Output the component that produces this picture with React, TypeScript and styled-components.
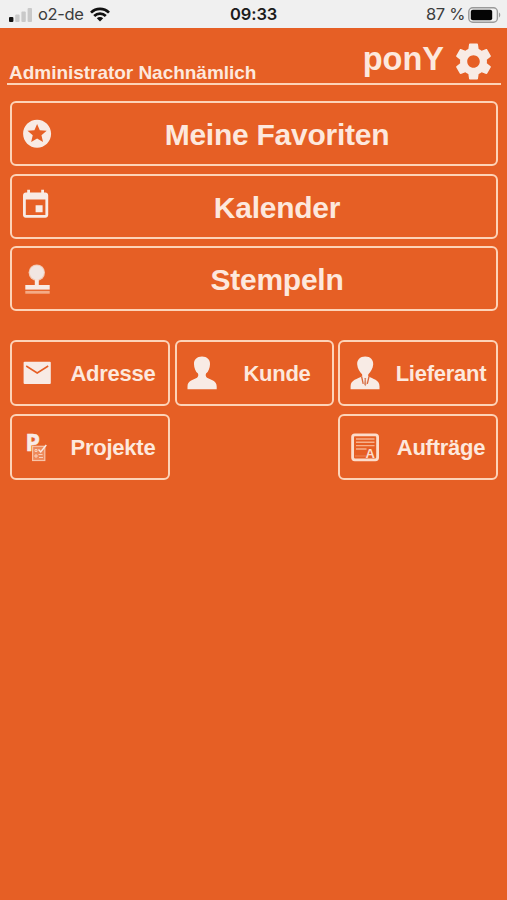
import React from 'react';
import styled, { createGlobalStyle } from 'styled-components';

const ORANGE = '#e65f25';
const LINE = '#fdd3b8';
const TEXT = '#fde8dd';
const ICON = '#f8ebe5';

const GlobalStyle = createGlobalStyle`
  body {
    margin: 0;
    background: ${ORANGE};
  }
`;

const Screen = styled.div`
  width: 507px;
  height: 900px;
  overflow: hidden;
  display: flex;
  flex-direction: column;
  background: ${ORANGE};
  color: ${TEXT};
  font-family: 'Liberation Sans', Arial, sans-serif;
  font-weight: 700;
`;

const StatusBar = styled.div`
  flex: none;
  box-sizing: border-box;
  height: 28px;
  padding: 1px 6px 0 9px;
  display: grid;
  grid-template-columns: 221px auto 1fr;
  align-items: center;
  background: #f0f0f0;
  color: #3c3c3c;
  font: 400 16.5px/27px Inter, sans-serif;
`;

const StatusGroup = styled.div<{ $end?: boolean }>`
  display: flex;
  align-items: center;
  justify-content: ${(p) => (p.$end ? 'flex-end' : 'flex-start')};
  gap: ${(p) => (p.$end ? 3 : 6)}px;
  white-space: nowrap;
  letter-spacing: -0.35px;
`;

const Clock = styled.span`
  font-weight: 600;
  font-size: 16.5px;
  letter-spacing: -0.1px;
  color: #1c1c1c;
`;

const Header = styled.header`
  flex: none;
  box-sizing: border-box;
  height: 57px;
  margin: 0 6px 0 7px;
  padding: 0 6px 0 2px;
  border-bottom: 2px solid ${LINE};
  display: flex;
  align-items: flex-end;
  justify-content: space-between;
`;

const UserName = styled.span`
  font-size: 19px;
  line-height: 20px;
  letter-spacing: -0.03px;
`;

const Brand = styled.div`
  display: flex;
  align-items: center;
  gap: 8px;
  height: 44px;
`;

const BrandName = styled.h1`
  margin: 0 0 5px;
  font-size: 32.5px;
  line-height: 36px;
`;

const Main = styled.main`
  display: flex;
  flex-direction: column;
  width: 488px;
  margin: 16px 0 0 10px;
`;

const WideList = styled.div`
  display: flex;
  flex-direction: column;
  gap: 7.7px;
  height: 239px;
`;

const TileGrid = styled.div`
  display: grid;
  grid-template-columns: 160px 159px 160px;
  justify-content: space-between;
  row-gap: 8px;
`;

const Tile = styled.button<{ $wide?: boolean; $column?: number }>`
  box-sizing: border-box;
  flex: none;
  height: ${(p) => (p.$wide ? 65 : 66)}px;
  padding: 0;
  display: flex;
  align-items: center;
  border: 2px solid ${LINE};
  border-radius: 6px;
  background: transparent;
  color: inherit;
  font: inherit;
  font-size: ${(p) => (p.$wide ? 30 : 22)}px;
  letter-spacing: -0.25px;
  grid-column: ${(p) => p.$column ?? 'auto'};
`;

const TileLabel = styled.span<{ $wide?: boolean }>`
  flex: 1;
  text-align: center;
  padding: ${(p) => (p.$wide ? 3 : 1)}px 0 0 2px;
`;

const IconCanvas = styled.svg`
  flex: none;
  width: 44px;
  height: 62px;
  fill: ${ICON};
`;

const Glyph = ({ children }: { children: React.ReactNode }) => (
  <IconCanvas viewBox="2 2 44 62" aria-hidden="true">
    {children}
  </IconCanvas>
);

const SignalIcon = () => (
  <svg width="23" height="14" viewBox="0 0 23 14">
    <rect x="0" y="9" width="4.4" height="5" rx="1" fill="#111" />
    <rect x="6.2" y="6.5" width="4.4" height="7.5" rx="1" fill="#c9c9c9" />
    <rect x="12.4" y="3.5" width="4.4" height="10.5" rx="1" fill="#c9c9c9" />
    <rect x="18.6" y="0" width="4.4" height="14" rx="1" fill="#c9c9c9" />
  </svg>
);

const WifiIcon = () => (
  <svg width="20" height="15" viewBox="0 0 20 15">
    <g fill="none" stroke="#111" strokeWidth="2.7">
      <path d="M1 5.6a12.7 12.7 0 0 1 18 0" />
      <path d="M4.2 9a8.2 8.2 0 0 1 11.6 0" />
    </g>
    <path d="M10 14.6 6.8 11.3a4.6 4.6 0 0 1 6.4 0z" fill="#111" />
  </svg>
);

const BatteryIcon = () => (
  <svg width="33" height="16" viewBox="0 0 33 16">
    <rect x="0.8" y="0.8" width="28.6" height="14.4" rx="4" fill="none" stroke="#9a9a9a" strokeWidth="1.4" />
    <rect x="2.8" y="2.8" width="21.4" height="10.4" rx="2" fill="#050505" />
    <path d="M31 5.6c1.7.7 1.7 4.1 0 4.8z" fill="#9a9a9a" />
  </svg>
);

const GearIcon = () => (
  <svg width="43" height="43" viewBox="0 0 24 24" fill={ICON}>
    <path d="M19.43 12.98c.04-.32.07-.64.07-.98s-.03-.66-.07-.98l2.11-1.65c.19-.15.24-.42.12-.64l-2-3.46c-.12-.22-.39-.3-.61-.22l-2.49 1c-.52-.4-1.08-.73-1.69-.98l-.38-2.65C14.46 2.18 14.25 2 14 2h-4c-.25 0-.46.18-.49.42l-.38 2.65c-.61.25-1.17.59-1.69.98l-2.49-1c-.23-.09-.49 0-.61.22l-2 3.46c-.13.22-.07.49.12.64l2.11 1.65c-.04.32-.07.65-.07.98s.03.66.07.98l-2.11 1.65c-.19.15-.24.42-.12.64l2 3.46c.12.22.39.3.61.22l2.49-1c.52.4 1.08.73 1.69.98l.38 2.65c.03.24.24.42.49.42h4c.25 0 .46-.18.49-.42l.38-2.65c.61-.25 1.17-.59 1.69-.98l2.49 1c.23.09.49 0 .61-.22l2-3.46c.12-.22.07-.49-.12-.64l-2.11-1.65zM12 15.5c-1.93 0-3.5-1.57-3.5-3.5s1.57-3.5 3.5-3.5 3.5 1.57 3.5 3.5-1.57 3.5-3.5 3.5z" />
  </svg>
);

const StarsIcon = () => (
  <Glyph>
    <g transform="translate(10.3 15.9) scale(1.4)">
      <path d="M11.99 2C6.47 2 2 6.48 2 12s4.47 10 9.99 10C17.52 22 22 17.52 22 12S17.52 2 11.99 2zm4.24 16L12 15.45 7.77 18l1.12-4.81-3.73-3.23 4.92-.42L12 5l1.92 4.53 4.92.42-3.73 3.23L16.23 18z" />
    </g>
  </Glyph>
);

const CalendarIcon = () => (
  <Glyph>
    <g transform="translate(8.8 15.4) scale(1.4)">
      <path d="M17 12h-5v5h5v-5zM16 1v2H8V1H6v2H5c-1.11 0-1.99.9-1.99 2L3 19c0 1.1.89 2 2 2h14c1.1 0 2-.9 2-2V5c0-1.1-.9-2-2-2h-1V1h-2zm3 18H5V8h14v11z" />
    </g>
  </Glyph>
);

const StampIcon = () => (
  <Glyph>
    <circle cx="26.8" cy="26.6" r="8.2" fill="#f3c9b4" />
    <circle cx="26.8" cy="26.6" r="7.1" fill="#f1e6e2" />
    <path d="M24.8 33.500h4v6h-4z" />
    <rect x="15.300" y="39" width="24.400" height="4.600" />
    <rect x="15.300" y="44.900" width="24.400" height="2.800" fill="#f4ab86" />
  </Glyph>
);

const MailIcon = () => (
  <Glyph>
    <rect x="13.6" y="21.8" width="27.2" height="22.2" rx="1" />
    <path d="M16.2 26 27.2 33 38.2 26" fill="none" stroke={ORANGE} strokeWidth="1.5" />
  </Glyph>
);

const PersonIcon = () => (
  <Glyph>
    <path d="M27 16.6c5.100 0 8.200 3.300 8 7.600-.1 3.600-1.500 7.600-4 9.400-.5 1.500-.4 3.300 1 4.100 4.200 2 9.700 3 9.700 8.800v2.800H12.500v-2.800c0-5.800 5.500-6.800 9.500-8.800 1.400-.8 1.500-2.600 1-4.100-2.500-1.800-3.900-5.800-4-9.400-.2-4.300 2.900-7.600 8-7.600z" />
  </Glyph>
);

const SupplierIcon = () => (
  <Glyph>
    <path d="M27.200 16.600c5.200 0 8.300 3.500 8 7.900-.3 4.300-2.600 7.300-4.600 9.400-.6.700-.5 2-.1 2.700 4.100 2.400 11 3.200 11 9.600v3.100H12.600v-3.100c0-6.400 7.200-7.200 11.300-9.600.4-.7.500-2-.1-2.700-2-2.100-4.300-5.100-4.600-9.400-.3-4.400 2.800-7.900 8-7.900z" />
    <path d="M23.600 36.500 25.200 43.800M31 36.500 29.300 43.800" fill="none" stroke="#d9673a" strokeWidth="1.300" />
    <path d="M26.300 38h1.900l-.3 1.700.5 4.500-1.100 2-1.200-2 .5-4.500z" fill="#d98664" />
  </Glyph>
);

const ProjectIcon = () => (
  <Glyph>
    <text x="15.600" y="36.700" fontFamily="Open Sans, sans-serif" fontWeight="700" fontSize="23" stroke={ICON} strokeWidth="0.600">P</text>
    <rect x="22.600" y="32.300" width="12.200" height="14.200" fill="#ee8a5b" stroke="#f8c4a8" strokeWidth="1.200" />
    <path d="M25 35.500h2v2h-2zM25 41h2v2h-2zM29 43.500h4M28.500 40.500h4" fill="none" stroke="#fbd8c6" strokeWidth="0.900" />
    <path d="M28.500 35.500 30.700 38 36.300 31" fill="none" stroke={ICON} strokeWidth="1.400" />
  </Glyph>
);

const OrderIcon = () => (
  <Glyph>
    <rect x="14.600" y="20.800" width="25" height="25" rx="2.200" fill="none" stroke="#fcdccb" strokeWidth="2.800" />
    <path d="M18 25h18.500M18 28.200h18.500M18 31.600h18.500M18 35h10.500" fill="none" stroke="#f7b08b" strokeWidth="1.400" />
    <path d="M17 42h11" fill="none" stroke="#ee8a5b" strokeWidth="0.900" />
    <text x="27.600" y="43.800" fontFamily="Liberation Sans, sans-serif" fontWeight="700" fontSize="13" fill="#fcdccb">A</text>
  </Glyph>
);

const wideItems = [
  { label: 'Meine Favoriten', Icon: StarsIcon },
  { label: 'Kalender', Icon: CalendarIcon },
  { label: 'Stempeln', Icon: StampIcon },
];

const tiles = [
  { label: 'Adresse', Icon: MailIcon, column: 1 },
  { label: 'Kunde', Icon: PersonIcon, column: 2 },
  { label: 'Lieferant', Icon: SupplierIcon, column: 3 },
  { label: 'Projekte', Icon: ProjectIcon, column: 1 },
  { label: 'Aufträge', Icon: OrderIcon, column: 3 },
];

export default function App() {
  return (
    <Screen>
      <GlobalStyle />
      <StatusBar>
        <StatusGroup>
          <SignalIcon />
          <span>o2-de</span>
          <WifiIcon />
        </StatusGroup>
        <Clock>09:33</Clock>
        <StatusGroup $end>
          <span>87 %</span>
          <BatteryIcon />
        </StatusGroup>
      </StatusBar>
      <Header>
        <UserName>Administrator Nachnämlich</UserName>
        <Brand>
          <BrandName>ponY</BrandName>
          <GearIcon />
        </Brand>
      </Header>
      <Main>
        <WideList>
          {wideItems.map(({ label, Icon }) => (
            <Tile key={label} $wide>
              <Icon />
              <TileLabel $wide>{label}</TileLabel>
            </Tile>
          ))}
        </WideList>
        <TileGrid>
          {tiles.map(({ label, Icon, column }) => (
            <Tile key={label} $column={column}>
              <Icon />
              <TileLabel>{label}</TileLabel>
            </Tile>
          ))}
        </TileGrid>
      </Main>
    </Screen>
  );
}
